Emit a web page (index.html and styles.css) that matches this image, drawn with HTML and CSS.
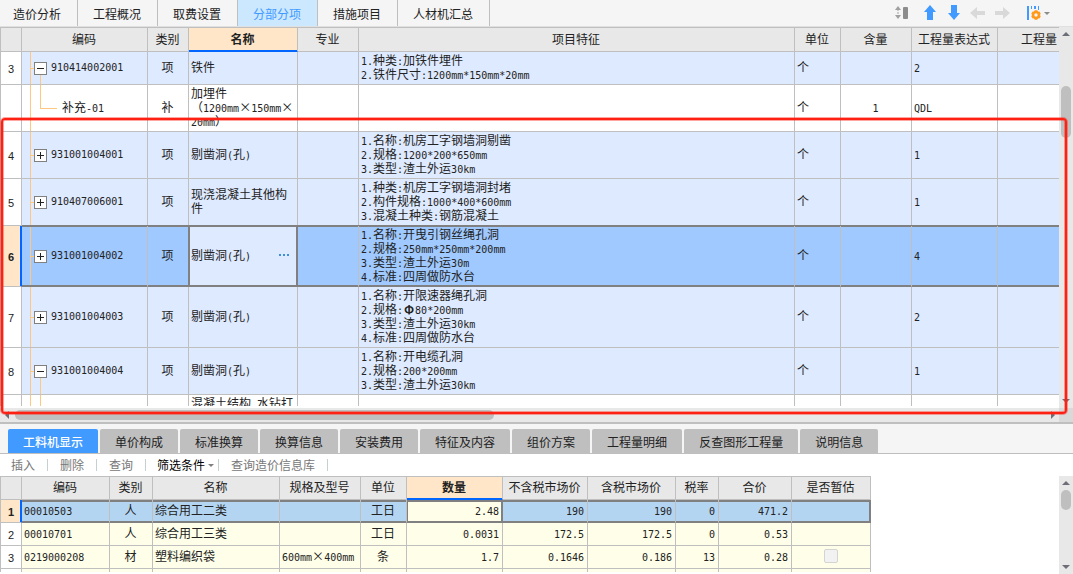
FILE: index.html
```html
<!DOCTYPE html>
<html lang="zh-CN">
<head>
<meta charset="utf-8">
<title>分部分项</title>
<link rel="stylesheet" href="styles.css">
</head>
<body>
<div class="app">
  <header class="topbar">
    <nav class="top-tabs" role="tablist">
      <button class="top-tab" role="tab">造价分析</button>
      <button class="top-tab" role="tab">工程概况</button>
      <button class="top-tab" role="tab">取费设置</button>
      <button class="top-tab active" role="tab" aria-selected="true">分部分项</button>
      <button class="top-tab" role="tab">措施项目</button>
      <button class="top-tab" role="tab">人材机汇总</button>
    </nav>
    <div class="tools">
      <button class="tool tool-first" aria-label="行高"><svg width="14" height="14" viewBox="0 0 14 14"><path d="M3 0l3 4H0zM3 13l3-4H0z" fill="#a0a0a0"/><path d="M3 3v7" stroke="#a0a0a0" stroke-dasharray="2 1"/><rect x="8" y="1" width="5" height="12" rx="1" fill="#8c8c8c"/></svg></button>
      <button class="tool" aria-label="上移"><svg width="12" height="15" viewBox="0 0 12 15"><path d="M6 0l6 7H9v8H3V7H0z" fill="#409aff"/></svg></button>
      <button class="tool" aria-label="下移"><svg width="12" height="15" viewBox="0 0 12 15"><path d="M6 15l6-7H9V0H3v8H0z" fill="#409aff"/></svg></button>
      <button class="tool" aria-label="左移"><svg width="16" height="12" viewBox="0 0 16 12"><path d="M0 6l7-6v4h8v4H7v4z" fill="#d9d9d9"/></svg></button>
      <button class="tool" aria-label="右移"><svg width="16" height="12" viewBox="0 0 16 12"><path d="M16 6L9 0v4H1v4h8v4z" fill="#d9d9d9"/></svg></button>
      <button class="tool tool-last" aria-label="列设置"><svg width="24" height="16" viewBox="0 0 24 16"><path d="M1 1h2v14H1zM5 1h1v3H5zM8 1h2v3H8zM12 1h1v4h-1z" fill="#409aff"/><circle cx="10" cy="10" r="3" fill="none" stroke="#ff9a1c" stroke-width="2.6"/><path d="M10 5.2v1.6M10 13.2v1.6M5.9 7.6l1.4.8M12.7 11.6l1.4.8M5.9 12.4l1.4-.8M12.7 8.4l1.4-.8" stroke="#ff9a1c" stroke-width="2.8"/><path d="M18 7h6l-3 3z" fill="#8c8c8c"/></svg></button>
    </div>
  </header>

  <section class="main-pane">
    <div class="grid-view">
      <table class="grid main-grid">
        <colgroup><col class="m-no"><col class="m-code"><col class="m-kind"><col class="m-name"><col class="m-major"><col><col class="m-unit"><col class="m-content"><col class="m-expr"><col class="m-qty"></colgroup>
        <thead>
          <tr><th></th><th>编码</th><th>类别</th><th class="current">名称</th><th>专业</th><th>项目特征</th><th>单位</th><th>含量</th><th>工程量表达式</th><th>工程量</th></tr>
        </thead>
        <tbody>
          <tr class="item">
            <td class="no">3</td>
            <td class="code open"><div class="node"><button class="toggle minus" aria-label="折叠"></button><span class="n">910414002001</span></div></td>
            <td class="mid">项</td><td>铁件</td><td></td>
            <td><span class="n">1.</span>种类<span class="n">:</span>加铁件埋件<br><span class="n">2.</span>铁件尺寸<span class="n">:1200mm*150mm*20mm</span></td>
            <td>个</td><td></td><td><span class="n">2</span></td><td></td>
          </tr>
          <tr>
            <td class="no"></td>
            <td class="code leaf"><div class="leaf-text">补充<span class="n">-01</span></div></td>
            <td class="mid">补</td><td>加埋件<br>（<span class="n">1200mm</span>×<span class="n">150mm</span>×<br><span class="n">20mm</span>）</td><td></td><td></td>
            <td>个</td><td class="mid"><span class="n">1</span></td><td><span class="n">QDL</span></td><td></td>
          </tr>
          <tr class="item">
            <td class="no">4</td>
            <td class="code"><div class="node"><button class="toggle" aria-label="展开"></button><span class="n">931001004001</span></div></td>
            <td class="mid">项</td><td>剔凿洞<span class="n">(</span>孔<span class="n">)</span></td><td></td>
            <td><span class="n">1.</span>名称<span class="n">:</span>机房工字钢墙洞剔凿<br><span class="n">2.</span>规格<span class="n">:1200*200*650mm</span><br><span class="n">3.</span>类型<span class="n">:</span>渣土外运<span class="n">30km</span></td>
            <td>个</td><td></td><td><span class="n">1</span></td><td></td>
          </tr>
          <tr class="item">
            <td class="no">5</td>
            <td class="code"><div class="node"><button class="toggle" aria-label="展开"></button><span class="n">910407006001</span></div></td>
            <td class="mid">项</td><td>现浇混凝土其他构<br>件</td><td></td>
            <td><span class="n">1.</span>种类<span class="n">:</span>机房工字钢墙洞封堵<br><span class="n">2.</span>构件规格<span class="n">:1000*400*600mm</span><br><span class="n">3.</span>混凝土种类<span class="n">:</span>钢筋混凝土</td>
            <td>个</td><td></td><td><span class="n">1</span></td><td></td>
          </tr>
          <tr class="item selected">
            <td class="no">6</td>
            <td class="code"><div class="node"><button class="toggle" aria-label="展开"></button><span class="n">931001004002</span></div></td>
            <td class="mid">项</td><td class="focus"><div class="editor"><span>剔凿洞<span class="n">(</span>孔<span class="n">)</span></span><button class="more" aria-label="更多"><svg width="11" height="3" viewBox="0 0 11 3"><path d="M0 0h2v2H0zM4 0h2v2H4zM8 0h2v2H8z" fill="#3d8fdc"/></svg></button></div></td><td></td>
            <td><span class="n">1.</span>名称<span class="n">:</span>开曳引钢丝绳孔洞<br><span class="n">2.</span>规格<span class="n">:250mm*250mm*200mm</span><br><span class="n">3.</span>类型<span class="n">:</span>渣土外运<span class="n">30m</span><br><span class="n">4.</span>标准<span class="n">:</span>四周做防水台</td>
            <td>个</td><td></td><td><span class="n">4</span></td><td></td>
          </tr>
          <tr class="item">
            <td class="no">7</td>
            <td class="code"><div class="node"><button class="toggle" aria-label="展开"></button><span class="n">931001004003</span></div></td>
            <td class="mid">项</td><td>剔凿洞<span class="n">(</span>孔<span class="n">)</span></td><td></td>
            <td><span class="n">1.</span>名称<span class="n">:</span>开限速器绳孔洞<br><span class="n">2.</span>规格<span class="n">:</span><b class="symbol">Φ</b><span class="n">80*200mm</span><br><span class="n">3.</span>类型<span class="n">:</span>渣土外运<span class="n">30km</span><br><span class="n">4.</span>标准<span class="n">:</span>四周做防水台</td>
            <td>个</td><td></td><td><span class="n">2</span></td><td></td>
          </tr>
          <tr class="item">
            <td class="no">8</td>
            <td class="code open"><div class="node"><button class="toggle minus" aria-label="折叠"></button><span class="n">931001004004</span></div></td>
            <td class="mid">项</td><td>剔凿洞<span class="n">(</span>孔<span class="n">)</span></td><td></td>
            <td><span class="n">1.</span>名称<span class="n">:</span>开电缆孔洞<br><span class="n">2.</span>规格<span class="n">:200*200mm</span><br><span class="n">3.</span>类型<span class="n">:</span>渣土外运<span class="n">30km</span></td>
            <td>个</td><td></td><td><span class="n">1</span></td><td></td>
          </tr>
          <tr>
            <td class="no"></td><td class="code branch"></td><td></td><td>混凝土结构<span class="n"> </span>水钻打</td><td></td><td></td><td></td><td></td><td></td><td></td>
          </tr>
        </tbody>
      </table>
    </div>
    <div class="vbar"><span class="arrow up"></span><span class="thumb main-thumb"></span><span class="arrow down"></span></div>
    <div class="hbar"><span class="arrow left"></span><span class="hthumb"></span><span class="arrow right"></span></div>
    <div class="corner"></div>
    <div class="marker"></div>
  </section>

  <section class="detail-pane">
    <nav class="detail-tabs" role="tablist">
      <button class="detail-tab active" role="tab" aria-selected="true">工料机显示</button>
      <button class="detail-tab" role="tab">单价构成</button>
      <button class="detail-tab" role="tab">标准换算</button>
      <button class="detail-tab" role="tab">换算信息</button>
      <button class="detail-tab" role="tab">安装费用</button>
      <button class="detail-tab" role="tab">特征及内容</button>
      <button class="detail-tab" role="tab">组价方案</button>
      <button class="detail-tab" role="tab">工程量明细</button>
      <button class="detail-tab" role="tab">反查图形工程量</button>
      <button class="detail-tab" role="tab">说明信息</button>
    </nav>
    <div class="actions">
      <button class="action">插入</button>
      <button class="action">删除</button>
      <button class="action">查询</button>
      <button class="action enabled">筛选条件<span class="caret"></span></button>
      <button class="action">查询造价信息库</button>
    </div>
    <div class="detail-body">
      <div class="grid-view">
        <table class="grid detail-grid">
          <colgroup><col class="d-no"><col class="d-code"><col class="d-kind"><col class="d-name"><col class="d-spec"><col class="d-unit"><col class="d-qty"><col class="d-net"><col class="d-gross"><col class="d-rate"><col class="d-total"><col class="d-est"></colgroup>
          <thead>
            <tr><th></th><th>编码</th><th>类别</th><th>名称</th><th>规格及型号</th><th>单位</th><th class="current">数量</th><th>不含税市场价</th><th>含税市场价</th><th>税率</th><th>合价</th><th>是否暂估</th></tr>
          </thead>
          <tbody>
            <tr class="selected"><td class="no">1</td><td><span class="n">00010503</span></td><td class="mid">人</td><td>综合用工二类</td><td></td><td class="mid">工日</td><td class="num focus"><span class="n">2.48</span></td><td class="num"><span class="n">190</span></td><td class="num"><span class="n">190</span></td><td class="num"><span class="n">0</span></td><td class="num"><span class="n">471.2</span></td><td></td></tr>
            <tr><td class="no">2</td><td><span class="n">00010701</span></td><td class="mid">人</td><td>综合用工三类</td><td></td><td class="mid">工日</td><td class="num"><span class="n">0.0031</span></td><td class="num"><span class="n">172.5</span></td><td class="num"><span class="n">172.5</span></td><td class="num"><span class="n">0</span></td><td class="num"><span class="n">0.53</span></td><td></td></tr>
            <tr><td class="no">3</td><td><span class="n">0219000208</span></td><td class="mid">材</td><td>塑料编织袋</td><td><span class="n">600mm</span>×<span class="n">400mm</span></td><td class="mid">条</td><td class="num"><span class="n">1.7</span></td><td class="num"><span class="n">0.1646</span></td><td class="num"><span class="n">0.186</span></td><td class="num"><span class="n">13</span></td><td class="num"><span class="n">0.28</span></td><td class="mid"><input class="check" type="checkbox" disabled aria-label="是否暂估"></td></tr>
            <tr><td class="no"></td><td></td><td></td><td></td><td></td><td></td><td></td><td></td><td></td><td></td><td></td><td></td></tr>
          </tbody>
        </table>
      </div>
      <div class="vbar"><span class="arrow up"></span><span class="thumb detail-thumb"></span><span class="arrow down"></span></div>
    </div>
  </section>
</div>
</body>
</html>
```
FILE: styles.css
```css
* { box-sizing: border-box; }

body {
  margin: 0;
  font: 12px/14px "Noto Sans CJK SC", sans-serif;
  color: #222;
  background: #fff;
}

button {
  margin: 0;
  padding: 0;
  border: 0;
  background: none;
  font: inherit;
  color: inherit;
  white-space: nowrap;
}

svg { display: block; }

.app {
  display: flex;
  flex-direction: column;
  height: 100vh;
  overflow: hidden;
}

/* top bar */
.topbar {
  display: flex;
  flex: none;
  justify-content: space-between;
  height: 27px;
  background: #f5f5f5;
  border-bottom: 1px solid #e0e0e0;
}
.top-tabs { display: flex; }
.top-tab {
  padding: 2px 16px 0 15px;
  border-right: 1px solid #bfbfbf;
}
.top-tab:first-child { padding: 2px 16px 0 13px; }
.top-tab.active { background: #cce8ff; color: #409aff; }
.tools {
  display: flex;
  align-items: center;
  padding: 0 23px 1px 0;
}
.tool {
  display: flex;
  justify-content: center;
  width: 24px;
}
.tool-first { margin-right: 4px; }
.tool-last { margin-left: 12px; }

/* panes */
.main-pane {
  position: relative;
  display: grid;
  grid-template: minmax(0, 1fr) 14px / minmax(0, 1fr) 14px;
  flex: 395 1 0;
  min-height: 0;
  border-bottom: 2px solid #bfbfbf;
}
.detail-pane {
  display: flex;
  flex-direction: column;
  flex: 150 1 0;
  min-height: 0;
}
.grid-view {
  min-width: 0;
  min-height: 0;
  margin-bottom: 2px;
  overflow: hidden;
}

/* shared grid */
.grid {
  table-layout: fixed;
  border-collapse: separate;
  border-spacing: 0;
  border-top: 1px solid #bfbfbf;
  border-left: 1px solid #bfbfbf;
}
.grid th, .grid td {
  border-right: 1px solid #bfbfbf;
  border-bottom: 1px solid #bfbfbf;
  text-align: left;
  white-space: nowrap;
}
.grid th {
  padding: 0 1px 2px 0;
  background: #e8e8e8;
  font-weight: 400;
  text-align: center;
}
.grid th.current {
  background: #ffe6c8;
  border-bottom-color: #06f;
  box-shadow: inset 0 -1px #06f;
  font-weight: 700;
}
.grid td { padding: 1px 3px 3px 2px; }
.grid .mid { text-align: center; }
.grid .num { text-align: right; }
.grid .no {
  padding: 2px 0 1px;
  background: #fff;
  font-family: "Liberation Sans", sans-serif;
  font-size: 11px;
  text-align: center;
}
.n {
  font: 10px/10px "DejaVu Sans Mono", monospace;
  white-space: pre;
}
.symbol {
  display: inline-block;
  width: 12px;
  line-height: 12px;
  text-align: center;
}
.grid .selected .no {
  background: #ffe6c8;
  border-right-color: #06f;
  box-shadow: inset -1px 0 #06f;
  font-weight: 700;
}

/* main grid */
.main-grid { width: calc(100% + 23px); }
.m-no { width: 21px; }
.m-code { width: 126px; }
.m-kind { width: 41px; }
.m-name { width: 109px; }
.m-major { width: 61px; }
.m-unit { width: 46px; }
.m-content { width: 71px; }
.m-expr { width: 86px; }
.m-qty { width: 84px; }
.main-grid th { height: 24px; }
.main-grid td { height: 33px; }
.item td { background-color: #deeaff; }
.main-grid .selected td:not(.no) {
  background-color: #9fc9ff;
  border-bottom-color: #808080;
  box-shadow: 0 -1px #808080, inset 0 1px #808080, inset 0 -1px #808080;
}
.main-grid .selected td.focus {
  background-color: #deeaff;
  border-right-color: #808080;
  box-shadow: 0 -1px #808080, -1px 0 #808080, inset 0 0 0 1px #808080;
}

/* tree column */
.grid .code {
  padding: 1px 0;
  background-image: linear-gradient(#ffc880, #ffc880);
  background-position: 8px 0;
  background-size: 1px 100%;
  background-repeat: no-repeat;
}
.grid .code.open, .grid .code.branch {
  background-image: linear-gradient(#ffc880, #ffc880), linear-gradient(#ffc880, #ffc880);
  background-position: 8px 0, 18px 100%;
  background-size: 1px 100%, 1px 50%;
}
.grid .code.branch { background-size: 1px 100%, 1px 100%; }
.grid .code.leaf {
  padding: 1px 0 3px;
  background-image: linear-gradient(#ffc880, #ffc880), linear-gradient(#ffc880, #ffc880), linear-gradient(#ffc880, #ffc880);
  background-position: 8px 0, 18px 0, 18px 50%;
  background-size: 1px 100%, 1px 50%, 17px 1px;
}
.node {
  display: flex;
  align-items: center;
  padding-left: 9px;
}
.node::before {
  content: "";
  width: 3px;
  height: 1px;
  background: #ffc880;
}
.toggle {
  width: 13px;
  height: 13px;
  margin-right: 4px;
  border: 1px solid #808080;
  background: linear-gradient(#222, #222) center / 7px 1px no-repeat, linear-gradient(#222, #222) center / 1px 7px no-repeat, #fff;
}
.toggle.minus { background: linear-gradient(#222, #222) center / 7px 1px no-repeat, #fff; }
.leaf-text { padding-left: 40px; }
.main-grid tr:last-child td { height: 47px; vertical-align: top; }
.editor {
  display: flex;
  align-items: center;
  justify-content: space-between;
}
.more { padding: 4px 4px 4px 0; }

/* scroll bars */
.vbar, .hbar {
  display: flex;
  align-items: center;
  background: #e8e8e8;
}
.vbar {
  flex-direction: column;
  width: 14px;
  padding: 5px 0;
}
.arrow { border: 4px solid transparent; }
.arrow.up { border-top: 0; border-bottom-color: #6e6e78; }
.arrow.down { margin-top: auto; border-bottom: 0; border-top-color: #6e6e78; }
.arrow.left { border-left: 0; border-right-color: #6e6e78; }
.arrow.right { margin-left: auto; border-right: 0; border-left-color: #6e6e78; }
.thumb {
  width: 10px;
  border-radius: 5px;
  background: #bfbfbf;
}
.main-thumb { height: 14%; margin-top: 50px; }
.detail-thumb { height: 20px; margin-top: 5px; }
.hbar { padding: 0 4px 0 5px; }
.hthumb {
  width: 45.6%;
  height: 10px;
  margin-left: 6px;
  border-radius: 5px;
  background: #bfbfbf;
}
.corner { background: #d9d9d9; }

/* red frame drawn over the main grid */
.marker {
  position: absolute;
  top: 91px;
  right: 6px;
  bottom: 8px;
  left: 1px;
  border: 2px solid #ff2014;
  border-radius: 4px;
  box-shadow: 0 0 0 1px #ff201466, inset 0 0 0 1px #ff201466;
  pointer-events: none;
}

/* detail pane */
.detail-tabs {
  display: flex;
  flex: none;
  gap: 2px;
  height: 30px;
  padding: 5px 8px 0;
  background: #f5f5f5;
  border-bottom: 1px solid #bfbfbf;
}
.detail-tab {
  padding: 1px 15px 0;
  border-radius: 2px 2px 0 0;
  background: #bfbfbf;
}
.detail-tab.active { background: #409aff; color: #fff; font-weight: 500; }
.actions {
  display: flex;
  flex: none;
  align-items: center;
  height: 22px;
}
.action {
  display: flex;
  align-items: center;
  height: 12px;
  padding: 0 12px;
  border-right: 1px solid #c5d0d0;
  color: #777;
}
.action:first-child { padding-left: 11px; }
.action.enabled { padding: 0 4px 0 11px; color: #000; }
.caret {
  margin-left: 3px;
  border: 3px solid transparent;
  border-top-color: #808080;
  border-bottom: 0;
}
.detail-body {
  display: grid;
  grid-template: minmax(0, 1fr) / minmax(0, 1fr) 14px;
  flex: 1;
  min-height: 0;
}
.detail-grid { width: 871px; }
.d-no { width: 21px; }
.d-code { width: 88px; }
.d-kind { width: 43px; }
.d-name { width: 127px; }
.d-spec { width: 81px; }
.d-unit { width: 46px; }
.d-qty { width: 96px; }
.d-net { width: 85px; }
.d-gross { width: 88px; }
.d-rate { width: 43px; }
.d-total { width: 73px; }
.d-est { width: 79px; }
.detail-grid th, .detail-grid td { height: 23px; }
.detail-grid td { background: #ffffe9; }
.detail-grid .selected td:not(.no) {
  background: #b4d5f2;
  border-bottom-color: #808080;
  box-shadow: inset 0 2px #808080, inset 0 -1px #808080;
}
.detail-grid .selected td.focus {
  background: #ffffe9;
  border-right-color: #808080;
  box-shadow: inset 0 2px #808080, inset 0 0 0 1px #808080;
}
.detail-grid .selected td:last-child {
  border-right-color: #808080;
  box-shadow: inset 0 2px #808080, inset -1px -1px #808080;
}
.check {
  appearance: none;
  display: block;
  width: 14px;
  height: 14px;
  margin: 0 auto;
  border: 1px solid #d4d4d4;
  border-radius: 2px;
  background: #f2f2f2;
}
```
